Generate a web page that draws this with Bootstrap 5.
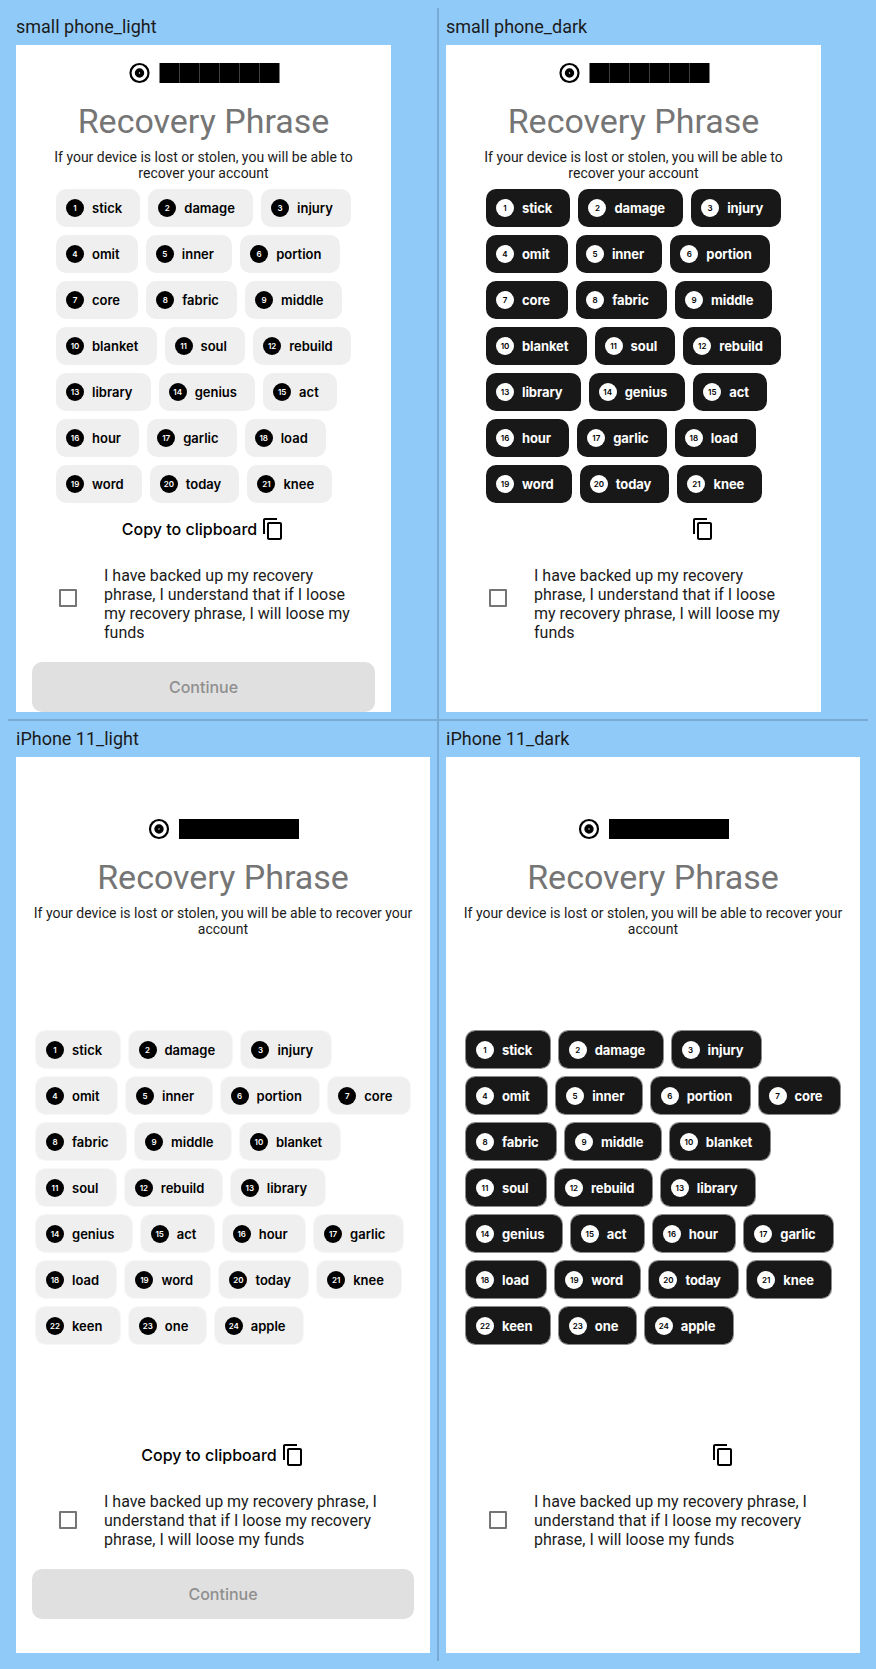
<!DOCTYPE html>
<html lang="en">
<head>
<meta charset="utf-8">
<meta name="viewport" content="width=device-width, initial-scale=1">
<title>Recovery Phrase</title>
<link href="https://cdn.jsdelivr.net/npm/bootstrap@5.3.0/dist/css/bootstrap.min.css" rel="stylesheet">
<style>
body { background: #90caf9; font-family: Roboto, sans-serif; color: #1b1b1b; }
.board { display: grid; grid-template-columns: 430px 430px; grid-template-rows: 712px 941px; width: 876px; padding: 8px; }
.cell { padding: 8px; border: 0 solid #79aad3; }
.cell:nth-child(odd) { border-right-width: 1px; }
.cell:nth-child(even) { border-left-width: 1px; padding-left: 7px; }
.cell:nth-child(-n+2) { border-bottom-width: 1px; }
.cell:nth-child(n+3) { border-top-width: 1px; padding-top: 7px; }
.device-name { font-size: 18px; line-height: 21px; height: 29px; }
.phone { background: #fff; overflow: hidden; }
.phone.sm { width: 375px; height: 667px; padding-top: 16px; }
.phone.lg { width: 414px; height: 896px; padding-top: 60px; }
.brand { height: 24px; }
.brand svg { overflow: visible; }
.title-text { font-size: 34px; line-height: 40px; color: #757575; margin-top: 16px; }
.sub-text { font-size: 14px; line-height: 16.4px; width: 343px; height: 40px; margin-top: 8px; }
.lg .sub-text { width: 382px; height: 125px; }
.chips { gap: 8px; font-family: Inter, sans-serif; }
.sm .chips { width: 302px; margin-left: 40px; }
.lg .chips { width: 382px; margin-left: 19px; gap: 7px; }
.chip { height: 38px; padding: 0 18.2px 0 10px; border-radius: 10px; background: #efefef; color: #000; font-size: 13px; font-weight: 600; }
.lg .chip { height: 39px; padding: 1px 17.4px 0 10px; border: 1px solid rgba(239,239,239,.5); background-clip: padding-box; }
.num { width: 18px; height: 18px; border-radius: 50%; background: #000; color: #fff; font-size: 8px; margin-right: 8px; }
.chip-word { padding-top: 1.5px; }
.phone.dark .chip { background-color: #181818; color: #fff; border-color: rgba(24,24,24,.5); }
.dark .chip-word { font-weight: 700; letter-spacing: -.1px; }
.phone.dark .num { background: #fff; color: #000; }
.copy { height: 24px; margin: 14px 0 25px; font: 500 16px Inter, sans-serif; color: #000; }
.lg .copy { margin-top: 98px; }
.box { width: 18px; height: 18px; border: 2px solid #757575; border-radius: 1px; margin: 0 27px 0 43px; }
.sm .box { margin-bottom: 12px; }
.lg .box { margin-bottom: 1px; }
.agree { font-size: 16px; line-height: 19px; width: 250px; }
.lg .agree { width: 280px; }
.go { height: 50px; margin: 20px 16px 0; border-radius: 10px; background: #e0e0e0; color: #8f8f8f; font: 500 16px Inter, sans-serif; }
</style>
</head>
<body>
<main class="board" id="board"></main>
<script src="https://cdn.jsdelivr.net/npm/bootstrap@5.3.0/dist/js/bootstrap.bundle.min.js"></script>
<script>
const words = 'stick damage injury omit inner portion core fabric middle blanket soul rebuild library genius act hour garlic load word today knee keen one apple'.split(' ');
const screens = [['small phone', 'sm', 'light'], ['small phone', 'sm', 'dark'], ['iPhone 11', 'lg', 'light'], ['iPhone 11', 'lg', 'dark']];
document.getElementById('board').innerHTML = screens.map(([name, size, theme]) => {
  const sm = size === 'sm', dark = theme === 'dark';
  const chips = words.slice(0, sm ? 21 : 24).map((w, i) => `<div class="chip d-flex align-items-center"><span class="num d-flex align-items-center justify-content-center">${i + 1}</span><span class="chip-word">${w}</span></div>`).join('');
  return `<section class="cell"><div class="device-name">${name}_${theme}</div>
  <div class="phone ${size} ${theme}">
    <div class="brand d-flex justify-content-center">
      <svg width="152" height="24" viewBox="${sm ? 0.5 : 0} 0 152 24"><circle cx="12" cy="12" r="9" fill="none" stroke="#000" stroke-width="2.2"/><circle cx="12" cy="12" r="2.7" fill="none" stroke="#000" stroke-width="4"/>${[0, 1, 2, 3, 4, 5].map(i => `<rect x="${32 + i * 20}" y="2" width="20" height="20"/>`).join('')}</svg>
    </div>
    <h1 class="title-text text-center fw-normal mb-0">Recovery Phrase</h1>
    <p class="sub-text text-center mx-auto mb-0">If your device is lost or stolen, you will be able to recover your account</p>
    <div class="chips d-flex flex-wrap">${chips}</div>
    <div class="copy d-flex justify-content-center align-items-center gap-1"><span class="${dark ? 'invisible' : ''}">Copy to clipboard</span>
      <svg width="24" height="24" viewBox="0 0 24 24"><path d="M16 1H4c-1.1 0-2 .9-2 2v14h2V3h12V1zm3 4H8c-1.1 0-2 .9-2 2v14c0 1.1.9 2 2 2h11c1.1 0 2-.9 2-2V7c0-1.1-.9-2-2-2zm0 16H8V7h11v14z"/></svg></div>
    <div class="d-flex align-items-center"><span class="box"></span><p class="agree mb-0">I have backed up my recovery phrase, I understand that if I loose my recovery phrase, I will loose my funds</p></div>
    ${dark ? '' : '<div class="go d-flex align-items-center justify-content-center">Continue</div>'}
  </div></section>`;
}).join('');
</script>
</body>
</html>
